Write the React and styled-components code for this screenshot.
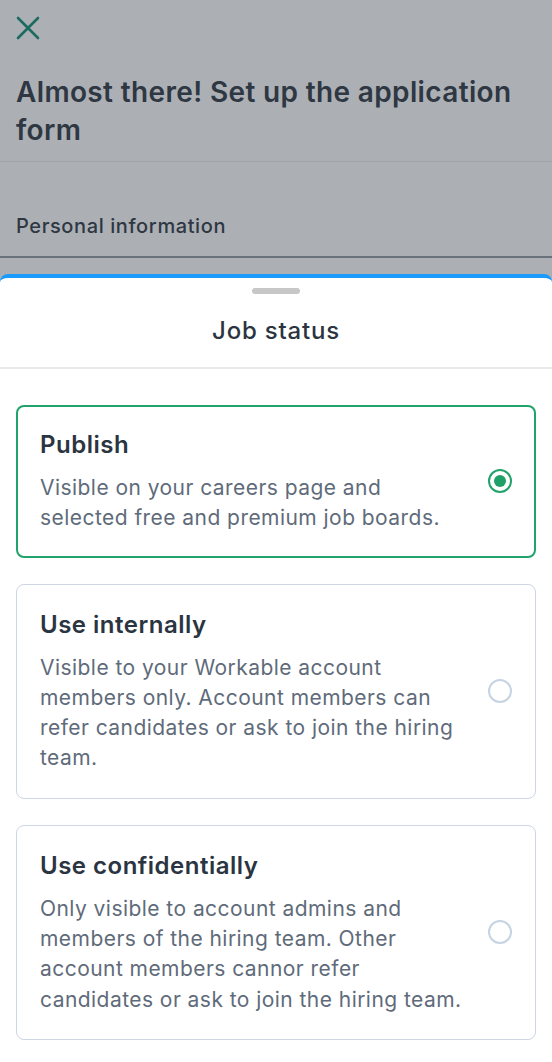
import React, { useState } from "react";
import styled, { createGlobalStyle } from "styled-components";

const GlobalStyle = createGlobalStyle`
  html, body {
    margin: 0;
    padding: 0;
    background: #acb0b5;
    font-family: Inter, "Noto Sans", sans-serif;
    -webkit-font-smoothing: antialiased;
  }
`;

const Page = styled.div`
  display: flex;
  flex-direction: column;
  width: 552px;
  height: 1062px;
  overflow: hidden;
`;

const Backdrop = styled.div`
  display: flex;
  flex-direction: column;
  padding-bottom: 16px;
`;

const CloseButton = styled.button`
  display: flex;
  align-items: center;
  justify-content: center;
  width: 56px;
  height: 56px;
  padding: 0;
  background: none;
  border: none;
  color: #1b6b60;
`;

const Heading = styled.h1`
  margin: 17px 16px 0;
  font-size: 28px;
  line-height: 38px;
  font-weight: 600;
  color: #2e3742;
  letter-spacing: 0.35px;
`;

const Rule = styled.div`
  height: ${(p) => p.$size || 1}px;
  background: ${(p) => p.$color};
  margin-top: ${(p) => p.$gap || 0}px;
`;

const SectionLabel = styled.div`
  margin: 50px 16px 0;
  font-size: 20px;
  line-height: 28px;
  font-weight: 500;
  color: #2e3742;
  letter-spacing: 0.6px;
`;

const Sheet = styled.div`
  flex: 1;
  display: flex;
  flex-direction: column;
  background: #fff;
  border-top: 4px solid #1a9bfc;
  border-radius: 8px 8px 0 0;
`;

const SheetHeader = styled.div`
  display: flex;
  flex-direction: column;
  align-items: center;
  padding: 10px 16px 20px;
  border-bottom: 2px solid #e7e9ec;
`;

const Handle = styled.div`
  width: 48px;
  height: 6px;
  border-radius: 3px;
  background: #c7c7c7;
`;

const SheetTitle = styled.h2`
  margin: 21px 0 0;
  font-size: 24px;
  line-height: 32px;
  font-weight: 500;
  color: #2b3440;
  letter-spacing: 0.8px;
`;

const OptionList = styled.div`
  display: flex;
  flex-direction: column;
  gap: 26px;
  padding: 36px 16px 0;
`;

const Card = styled.label`
  display: flex;
  align-items: center;
  gap: 16px;
  padding: ${(p) => (p.$selected ? "22px" : "24px 23px")};
  border: ${(p) => (p.$selected ? "2px solid #22a36b" : "1px solid #cdd6e2")};
  border-radius: 8px;
  cursor: pointer;
`;

const CardBody = styled.div`
  flex: 1;
  display: flex;
  flex-direction: column;
  gap: 12px;
`;

const CardTitle = styled.div`
  font-size: 24px;
  line-height: 32px;
  font-weight: 600;
  color: #2b3441;
  letter-spacing: 0.5px;
`;

const CardText = styled.div`
  font-size: 21px;
  line-height: 30.3px;
  color: #5f6b7a;
  letter-spacing: 0.45px;
`;

const Radio = styled.span`
  flex: none;
  box-sizing: border-box;
  width: 24px;
  height: 24px;
  border-radius: 50%;
  border: 2px solid ${(p) => (p.$checked ? "#22a36b" : "#c6d3e2")};
  display: flex;
  align-items: center;
  justify-content: center;
  &::after {
    content: "";
    width: 12px;
    height: 12px;
    border-radius: 50%;
    background: ${(p) => (p.$checked ? "#1fa068" : "transparent")};
  }
`;

const options = [
  {
    id: "publish",
    title: "Publish",
    text: "Visible on your careers page and selected free and premium job boards.",
  },
  {
    id: "internal",
    title: "Use internally",
    text: "Visible to your Workable account members only. Account members can refer candidates or ask to join the hiring team.",
  },
  {
    id: "confidential",
    title: "Use confidentially",
    text: "Only visible to account admins and members of the hiring team. Other account members cannor refer candidates or ask to join the hiring team.",
  },
];

function CloseIcon() {
  return (
    <svg width="24" height="24" viewBox="0 0 24 24" fill="none">
      <path
        d="M2 2L22 22M22 2L2 22"
        stroke="currentColor"
        strokeWidth="2.6"
        strokeLinecap="round"
      />
    </svg>
  );
}

export default function App() {
  const [status, setStatus] = useState("publish");

  return (
    <Page>
      <GlobalStyle />
      <Backdrop>
        <CloseButton aria-label="Close">
          <CloseIcon />
        </CloseButton>
        <Heading>Almost there! Set up the application form</Heading>
        <Rule $color="#9ea3a9" $gap={12} />
        <SectionLabel>Personal information</SectionLabel>
        <Rule $color="#6a727b" $size={2} $gap={16} />
      </Backdrop>
      <Sheet>
        <SheetHeader>
          <Handle />
          <SheetTitle>Job status</SheetTitle>
        </SheetHeader>
        <OptionList>
          {options.map((o) => (
            <Card
              key={o.id}
              $selected={status === o.id}
              onClick={() => setStatus(o.id)}
            >
              <CardBody>
                <CardTitle>{o.title}</CardTitle>
                <CardText>{o.text}</CardText>
              </CardBody>
              <Radio $checked={status === o.id} />
            </Card>
          ))}
        </OptionList>
      </Sheet>
    </Page>
  );
}
